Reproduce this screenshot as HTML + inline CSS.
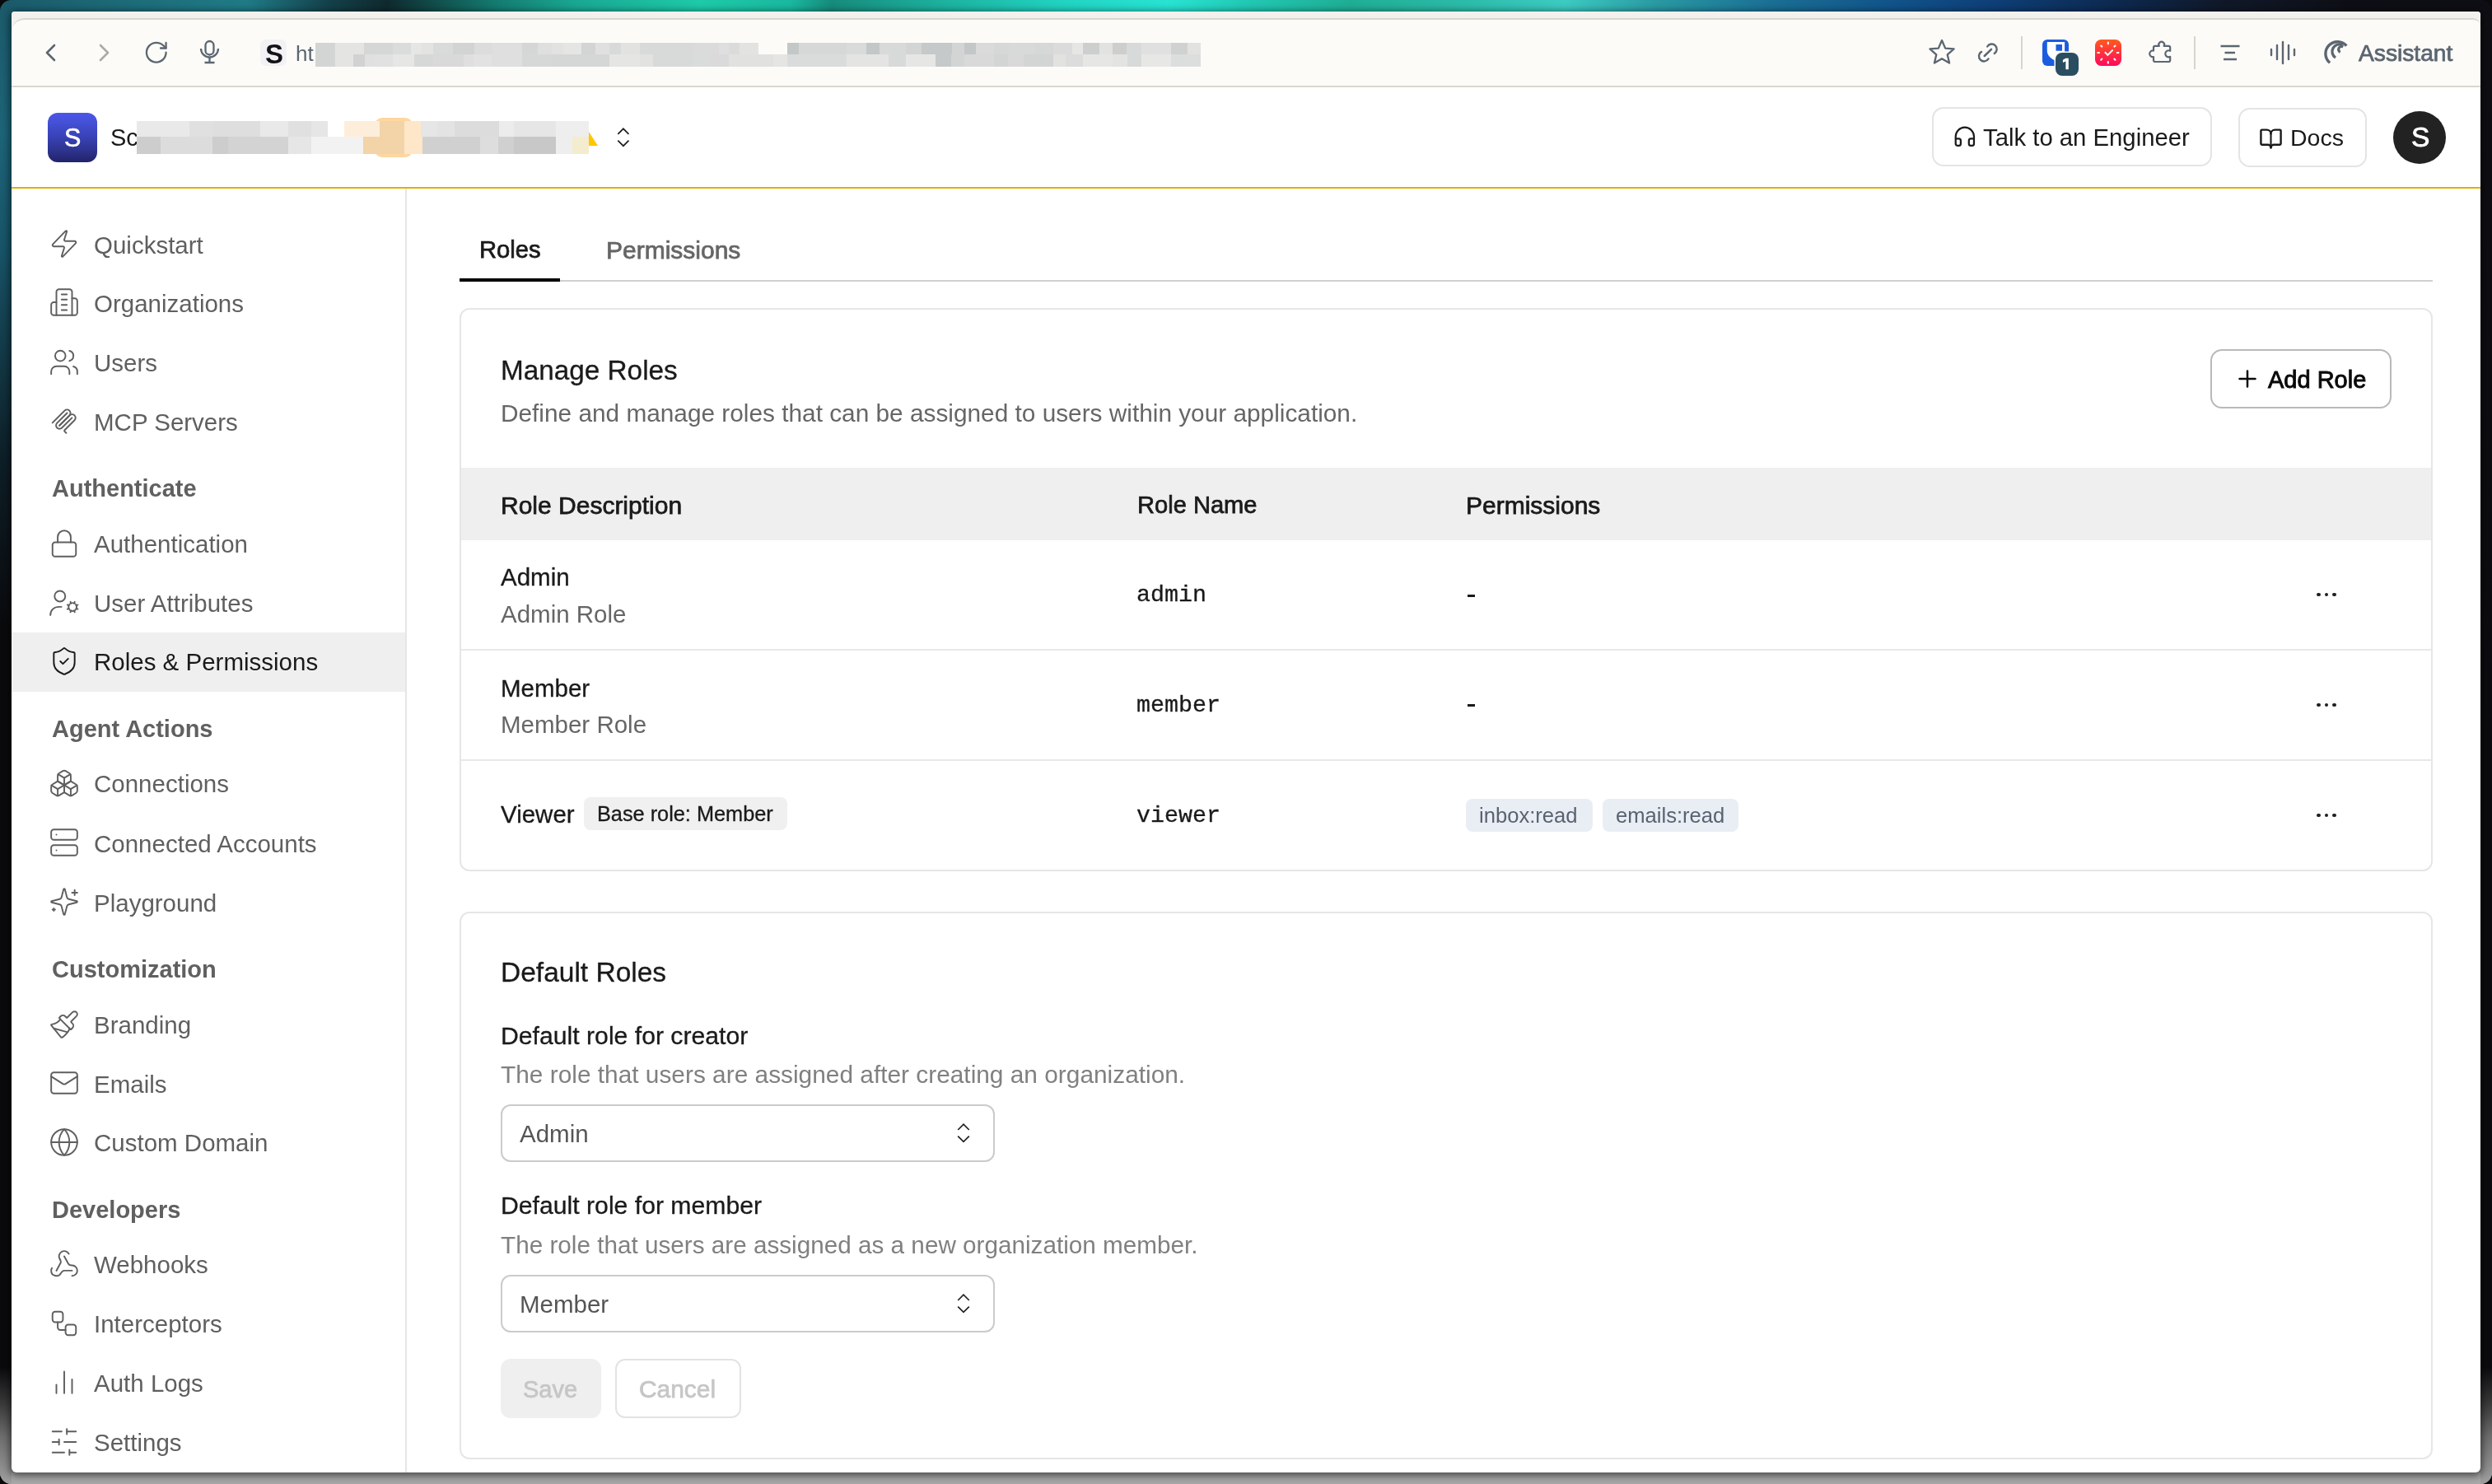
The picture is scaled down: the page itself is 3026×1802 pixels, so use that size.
<!DOCTYPE html>
<html><head><meta charset="utf-8"><title>Roles &amp; Permissions</title>
<style>
html,body{margin:0;padding:0;}
body{width:3026px;height:1802px;position:relative;overflow:hidden;background:#0a0a0c;font-family:"Liberation Sans", sans-serif;-webkit-font-smoothing:antialiased;}
.t{position:absolute;white-space:pre;will-change:transform;}
.r{position:absolute;box-sizing:border-box;}
</style></head><body>

<div class="r" style="left:0px;top:0px;width:3026px;height:1802px;background:linear-gradient(180deg,#0b0b0e 0px,#0b0b0e 1660px,#6a6a6a 1760px,#a9a9a9 1802px);border-radius:14px;"></div>
<div class="r" style="left:0px;top:0px;width:3026px;height:16px;background:linear-gradient(90deg,#1b5a6a 0px,#1f7b86 300px,#14404a 400px,#0f2a2e 470px,#147a70 600px,#1aa893 700px,#1ecaa9 850px,#1ab89f 960px,#178b7c 1010px,#1db3a0 1150px,#22d5c4 1300px,#28e3d3 1420px,#22c7b2 1520px,#1fae95 1640px,#2ab9a6 1760px,#3ccbc2 1900px,#2a9aa3 2010px,#1a6f95 2150px,#11538a 2300px,#0e3f78 2420px,#0d2a52 2560px,#101828 2700px,#0e0f16 2850px,#0e0e14 3026px);border-radius:18px 18px 0 0;"></div>
<div class="r" style="left:0px;top:0px;width:14px;height:1802px;background:linear-gradient(180deg,#1b5a6a 0px,#1d6478 160px,#185468 300px,#0d1e26 560px,#0a0a0d 760px,#0a0a0d 1660px,#3a3a3a 1705px,#6e6e6e 1745px,#959595 1790px,#a0a0a0 1802px);border-radius:14px 0 0 14px;"></div>
<div class="r" style="left:3012px;top:0px;width:14px;height:1802px;background:linear-gradient(180deg,#0e0e14 0px,#0b0b0f 900px,#0b0b0f 1660px,#3a3a3a 1705px,#6e6e6e 1745px,#959595 1790px,#a0a0a0 1802px);border-radius:0 14px 14px 0;"></div>
<div class="r" style="left:14px;top:1788px;width:2998px;height:14px;background:#a8a8a8;"></div>
<div class="r" style="left:14px;top:14px;width:2998px;height:1774px;background:#ffffff;border-radius:4px 4px 6px 6px;box-shadow:0 2px 10px 2px rgba(0,0,0,0.55);"></div>
<div class="r" style="left:14px;top:14px;width:2998px;height:46px;background:#f2f1ee;border-radius:4px 4px 0 0;"></div>
<div class="r" style="left:14px;top:22px;width:2998px;height:84px;background:#fcfbf8;border-top:2px solid #d8d7cf;border-bottom:2px solid #d8d7cf;border-radius:16px 9px 0 0;"></div>
<svg class="r" style="left:52px;top:52px;" width="20" height="24" viewBox="0 0 20 24" fill="none" stroke-linecap="round" stroke-linejoin="round"><path d="M14 3 L5 12 L14 21" stroke="#5b6670" stroke-width="2.6"/></svg>
<svg class="r" style="left:117px;top:52px;" width="20" height="24" viewBox="0 0 20 24" fill="none" stroke-linecap="round" stroke-linejoin="round"><path d="M5 3 L14 12 L5 21" stroke="#a9aba7" stroke-width="2.6"/></svg>
<svg class="r" style="left:174.3px;top:48.3px;" width="31.5" height="31.5" viewBox="0 0 24 24" fill="none" stroke-linecap="round" stroke-linejoin="round"><path d="M21 12a9 9 0 1 1-9-9c2.52 0 4.93 1 6.74 2.74L21 8" stroke="#5b6670" stroke-width="1.75"/><path d="M21 3v5h-5" stroke="#5b6670" stroke-width="1.75"/></svg>
<svg class="r" style="left:238px;top:46px;" width="34" height="34" viewBox="0 0 34 34" fill="none" stroke-linecap="round" stroke-linejoin="round"><rect x="11.5" y="4" width="10" height="16.5" rx="5" stroke="#5b6670" stroke-width="2.3"/><path d="M6 13 A10.5 10.5 0 0 0 27 13" stroke="#5b6670" stroke-width="2.3" stroke-linecap="butt"/><path d="M16.5 24 V29.5 M10.5 30 H22.5" stroke="#5b6670" stroke-width="2.3" stroke-linecap="butt"/></svg>
<div class="r" style="left:316px;top:48px;width:32px;height:32px;background:#f2f2f5;border-radius:7px;"></div>
<div class="t" style="left:321.50px;top:44.26px;font-size:33px;line-height:43px;color:#111318;font-weight:700;font-family:'Liberation Sans', sans-serif;letter-spacing:0px;">S</div>
<div class="t" style="left:359.00px;top:48.19px;font-size:26px;line-height:34px;color:#5b6670;font-weight:400;font-family:'Liberation Sans', sans-serif;letter-spacing:0px;">ht</div>
<div class="r" style="left:383px;top:52px;width:24px;height:14px;background:#d3d5d5;"></div>
<div class="r" style="left:407px;top:52px;width:35px;height:14px;background:#e4e4e3;"></div>
<div class="r" style="left:442px;top:52px;width:35px;height:14px;background:#d5d7d7;"></div>
<div class="r" style="left:477px;top:52px;width:22px;height:14px;background:#dadcdb;"></div>
<div class="r" style="left:499px;top:52px;width:13px;height:14px;background:#e6e6e5;"></div>
<div class="r" style="left:512px;top:52px;width:14px;height:14px;background:#e3e3e2;"></div>
<div class="r" style="left:526px;top:52px;width:24px;height:14px;background:#d9dada;"></div>
<div class="r" style="left:550px;top:52px;width:26px;height:14px;background:#d2d3d3;"></div>
<div class="r" style="left:576px;top:52px;width:22px;height:14px;background:#dcdcdc;"></div>
<div class="r" style="left:598px;top:52px;width:36px;height:14px;background:#dfdfdf;"></div>
<div class="r" style="left:634px;top:52px;width:19px;height:14px;background:#d5d7d7;"></div>
<div class="r" style="left:653px;top:52px;width:17px;height:14px;background:#dfdfdf;"></div>
<div class="r" style="left:670px;top:52px;width:14px;height:14px;background:#e2e2e1;"></div>
<div class="r" style="left:684px;top:52px;width:22px;height:14px;background:#e5e5e4;"></div>
<div class="r" style="left:706px;top:52px;width:17px;height:14px;background:#d3d5d5;"></div>
<div class="r" style="left:723px;top:52px;width:17px;height:14px;background:#e0e0e0;"></div>
<div class="r" style="left:740px;top:52px;width:14px;height:14px;background:#d8d9d9;"></div>
<div class="r" style="left:754px;top:52px;width:23px;height:14px;background:#e2e2e1;"></div>
<div class="r" style="left:777px;top:52px;width:64px;height:14px;background:#d8d9d9;"></div>
<div class="r" style="left:841px;top:52px;width:32px;height:14px;background:#dbdbdb;"></div>
<div class="r" style="left:873px;top:52px;width:12px;height:14px;background:#dfdfdf;"></div>
<div class="r" style="left:885px;top:52px;width:13px;height:14px;background:#dbdbdb;"></div>
<div class="r" style="left:898px;top:52px;width:23px;height:14px;background:#e3e3e2;"></div>
<div class="r" style="left:956px;top:52px;width:14px;height:14px;background:#c3c7c8;"></div>
<div class="r" style="left:970px;top:52px;width:58px;height:14px;background:#d6d8d8;"></div>
<div class="r" style="left:1028px;top:52px;width:24px;height:14px;background:#d9dbdb;"></div>
<div class="r" style="left:1052px;top:52px;width:16px;height:14px;background:#c3c7c8;"></div>
<div class="r" style="left:1068px;top:52px;width:32px;height:14px;background:#d8dada;"></div>
<div class="r" style="left:1100px;top:52px;width:19px;height:14px;background:#d3d5d5;"></div>
<div class="r" style="left:1119px;top:52px;width:37px;height:14px;background:#c5c9ca;"></div>
<div class="r" style="left:1156px;top:52px;width:15px;height:14px;background:#d3d5d5;"></div>
<div class="r" style="left:1171px;top:52px;width:14px;height:14px;background:#c3c7c8;"></div>
<div class="r" style="left:1185px;top:52px;width:22px;height:14px;background:#dadadb;"></div>
<div class="r" style="left:1207px;top:52px;width:18px;height:14px;background:#d6d8d8;"></div>
<div class="r" style="left:1225px;top:52px;width:31px;height:14px;background:#d8d9d9;"></div>
<div class="r" style="left:1256px;top:52px;width:23px;height:14px;background:#d6d8d8;"></div>
<div class="r" style="left:1279px;top:52px;width:23px;height:14px;background:#dbdbdb;"></div>
<div class="r" style="left:1302px;top:52px;width:13px;height:14px;background:#e6e6e5;"></div>
<div class="r" style="left:1315px;top:52px;width:20px;height:14px;background:#cdcfcf;"></div>
<div class="r" style="left:1335px;top:52px;width:16px;height:14px;background:#e2e2e1;"></div>
<div class="r" style="left:1351px;top:52px;width:17px;height:14px;background:#cdcfcf;"></div>
<div class="r" style="left:1368px;top:52px;width:18px;height:14px;background:#d8dada;"></div>
<div class="r" style="left:1386px;top:52px;width:36px;height:14px;background:#e0e0e1;"></div>
<div class="r" style="left:1422px;top:52px;width:20px;height:14px;background:#d0d2d2;"></div>
<div class="r" style="left:1442px;top:52px;width:16px;height:14px;background:#e2e2e1;"></div>
<div class="r" style="left:383px;top:66px;width:24px;height:15px;background:#d3d5d5;"></div>
<div class="r" style="left:407px;top:66px;width:22px;height:15px;background:#e4e4e3;"></div>
<div class="r" style="left:429px;top:66px;width:14px;height:15px;background:#d1d3d3;"></div>
<div class="r" style="left:443px;top:66px;width:12px;height:15px;background:#dfe0df;"></div>
<div class="r" style="left:455px;top:66px;width:22px;height:15px;background:#e1e1e1;"></div>
<div class="r" style="left:477px;top:66px;width:26px;height:15px;background:#e6e6e5;"></div>
<div class="r" style="left:503px;top:66px;width:23px;height:15px;background:#d6d8d8;"></div>
<div class="r" style="left:526px;top:66px;width:37px;height:15px;background:#d9d9d9;"></div>
<div class="r" style="left:563px;top:66px;width:12px;height:15px;background:#dfdfdf;"></div>
<div class="r" style="left:575px;top:66px;width:22px;height:15px;background:#e2e2e2;"></div>
<div class="r" style="left:597px;top:66px;width:37px;height:15px;background:#dfdfdf;"></div>
<div class="r" style="left:634px;top:66px;width:36px;height:15px;background:#d6d8d8;"></div>
<div class="r" style="left:670px;top:66px;width:70px;height:15px;background:#d5d7d7;"></div>
<div class="r" style="left:740px;top:66px;width:37px;height:15px;background:#e5e5e4;"></div>
<div class="r" style="left:777px;top:66px;width:16px;height:15px;background:#e2e2e1;"></div>
<div class="r" style="left:793px;top:66px;width:48px;height:15px;background:#d8d9d9;"></div>
<div class="r" style="left:841px;top:66px;width:21px;height:15px;background:#dadcdb;"></div>
<div class="r" style="left:862px;top:66px;width:23px;height:15px;background:#dadada;"></div>
<div class="r" style="left:885px;top:66px;width:54px;height:15px;background:#e1e1e0;"></div>
<div class="r" style="left:939px;top:66px;width:17px;height:15px;background:#e5e5e4;"></div>
<div class="r" style="left:956px;top:66px;width:72px;height:15px;background:#dadcdc;"></div>
<div class="r" style="left:1028px;top:66px;width:51px;height:15px;background:#e4e4e3;"></div>
<div class="r" style="left:1079px;top:66px;width:21px;height:15px;background:#d8dada;"></div>
<div class="r" style="left:1100px;top:66px;width:36px;height:15px;background:#e6e6e5;"></div>
<div class="r" style="left:1136px;top:66px;width:19px;height:15px;background:#c5c9ca;"></div>
<div class="r" style="left:1155px;top:66px;width:16px;height:15px;background:#d3d5d5;"></div>
<div class="r" style="left:1171px;top:66px;width:36px;height:15px;background:#d9d9da;"></div>
<div class="r" style="left:1207px;top:66px;width:17px;height:15px;background:#d3d5d5;"></div>
<div class="r" style="left:1224px;top:66px;width:19px;height:15px;background:#d9d9d9;"></div>
<div class="r" style="left:1243px;top:66px;width:36px;height:15px;background:#d3d5d5;"></div>
<div class="r" style="left:1279px;top:66px;width:15px;height:15px;background:#e2e2e1;"></div>
<div class="r" style="left:1294px;top:66px;width:21px;height:15px;background:#dcdcdc;"></div>
<div class="r" style="left:1315px;top:66px;width:36px;height:15px;background:#e6e6e5;"></div>
<div class="r" style="left:1351px;top:66px;width:18px;height:15px;background:#e3e3e2;"></div>
<div class="r" style="left:1369px;top:66px;width:17px;height:15px;background:#d8dada;"></div>
<div class="r" style="left:1386px;top:66px;width:36px;height:15px;background:#e7e7e6;"></div>
<div class="r" style="left:1422px;top:66px;width:36px;height:15px;background:#dcdede;"></div>
<svg class="r" style="left:2340px;top:46px;" width="36" height="34" viewBox="0 0 36 34" fill="none" stroke-linecap="round" stroke-linejoin="round"><path d="M18 3 L22.2 12.6 L32.6 13.4 L24.7 20.3 L27.1 30.5 L18 25.2 L8.9 30.5 L11.3 20.3 L3.4 13.4 L13.8 12.6 Z" stroke="#5b6670" stroke-width="2.3"/></svg>
<svg class="r" style="left:2396px;top:44px;" width="40" height="40" viewBox="0 0 40 40" fill="none" stroke-linecap="round" stroke-linejoin="round"><path d="M13.7 24 L22 15.9" stroke="#5b6670" stroke-width="2.5"/><path d="M17.2 12.5 A6.2 6.2 0 1 1 25.7 21" stroke="#5b6670" stroke-width="2.4"/><path d="M18.5 27.4 A6.2 6.2 0 1 1 10 18.9" stroke="#5b6670" stroke-width="2.4"/></svg>
<div class="r" style="left:2454px;top:44px;width:2px;height:40px;background:#d6d5cc;"></div>
<svg class="r" style="left:2476px;top:44px" width="52" height="52" viewBox="0 0 52 52"><rect x="4" y="4" width="32" height="32" rx="6" fill="#1b5ddf"/><path d="M9.8 7.1 H31.1 V30 H20 C14 27 9.8 23 9.8 18 Z" fill="#ffffff"/><rect x="20.5" y="10" width="7.5" height="7.7" fill="#1b5ddf"/><rect x="18.5" y="18.5" width="31" height="31" rx="9" fill="#fcfbf8"/><rect x="20" y="20" width="28" height="28" rx="8" fill="#2a4d60"/></svg>
<svg class="r" style="left:2500px;top:66px" width="16" height="22" viewBox="0 0 16 22"><path d="M8.3 4.7 H11.8 V18.3 H8.4 V8.6 L4.9 9.9 V6.8 Z" fill="#fff"/></svg>
<svg class="r" style="left:2544px;top:48px" width="32" height="32" viewBox="0 0 32 32"><defs><linearGradient id="rg" x1="0" y1="0" x2="0" y2="1"><stop offset="0" stop-color="#ff5a1e"/><stop offset="1" stop-color="#ff0a5c"/></linearGradient></defs><rect x="0" y="0" width="32" height="32" rx="7.5" fill="url(#rg)"/><g stroke="#fff" stroke-width="2.1" stroke-linecap="round"><path d="M15.8 3.6v1.6M15.8 27v1.6M3.3 16h1.6M26.8 16h1.6M7.2 7.5l1.1 1.1M23.4 23.6l1.1 1.1M7.2 24.7l1.1-1.1M23.4 8.6l1.1-1.1"/></g><path d="M11.9 15.2 L15.4 18.9 L21.6 12.5" stroke="#fff" stroke-width="2" fill="none"/></svg>
<svg class="r" style="left:2600px;top:44px;" width="45" height="40" viewBox="0 0 45 40" fill="none" stroke-linecap="round" stroke-linejoin="round"><path d="M21.8 11.9 A3.4 3.4 0 1 1 27.6 11.9 H33.2 a2 2 0 0 1 2 2 V17.8 A4 4 0 1 0 35.2 24.8 V29 a2 2 0 0 1 -2 2 H17 a2 2 0 0 1 -2 -2 V25.1 A3.9 3.9 0 1 1 15 17.5 V13.9 a2 2 0 0 1 2 -2 Z" stroke="#5b6670" stroke-width="2.2"/></svg>
<div class="r" style="left:2664px;top:44px;width:2px;height:40px;background:#d6d5cc;"></div>
<svg class="r" style="left:2690px;top:48px;" width="36" height="30" viewBox="0 0 36 30" fill="none" stroke-linecap="round" stroke-linejoin="round"><path d="M6.5 8 H29.5 M11.5 16 H24 M10 24 H26" stroke="#5b6670" stroke-width="2.3" stroke-linecap="butt"/></svg>
<svg class="r" style="left:2752px;top:48px;" width="40" height="32" viewBox="0 0 40 32" fill="none" stroke-linecap="round" stroke-linejoin="round"><path d="M6 12v7 M13 7v17 M20 3v26 M27 7v17 M34 12v7" stroke="#5b6670" stroke-width="2.4"/></svg>
<svg class="r" style="left:2815px;top:44px;" width="45" height="40" viewBox="0 0 45 40" fill="none" stroke-linecap="round" stroke-linejoin="round"><path d="M14.08 32.31 A14.5 14.5 0 1 1 34.34 11.69" stroke="#5b6670" stroke-width="3.4" stroke-linecap="butt"/><path d="M20.99 25.98 A8.7 8.7 0 0 1 29.55 10.85" stroke="#5b6670" stroke-width="3.3" stroke-linecap="butt"/><path d="M26.72 19.40 A3.7 3.7 0 1 1 30.25 12.90" stroke="#5b6670" stroke-width="3.2" stroke-linecap="butt"/></svg>
<div class="t" style="left:2864.00px;top:45.82px;font-size:28.2px;line-height:37px;color:#5b6670;font-weight:400;font-family:'Liberation Sans', sans-serif;letter-spacing:0px;-webkit-text-stroke:0.75px #5b6670;">Assistant</div>
<div class="r" style="left:58px;top:137px;width:60px;height:60px;background:linear-gradient(180deg,#4a56e8 0%,#4450d6 20%,#3841b4 50%,#2c3188 80%,#22226a 100%);border-radius:12px;"></div>
<div class="t" style="left:77.50px;top:147.23px;font-size:30.5px;line-height:40px;color:#ffffff;font-weight:400;font-family:'Liberation Sans', sans-serif;letter-spacing:0px;-webkit-text-stroke:0.6px #ffffff;">S</div>
<div class="t" style="left:134.00px;top:148.15px;font-size:29px;line-height:38px;color:#1a1a1a;font-weight:400;font-family:'Liberation Sans', sans-serif;letter-spacing:0px;">Sc</div>
<div class="r" style="left:455px;top:143px;width:46px;height:48px;background:#fdd6a0;border-radius:9px;"></div>
<div class="r" style="left:166px;top:147px;width:64px;height:19px;background:#e9e9e9;"></div>
<div class="r" style="left:230px;top:147px;width:28px;height:19px;background:#e0e0e0;"></div>
<div class="r" style="left:258px;top:147px;width:58px;height:19px;background:#dedede;"></div>
<div class="r" style="left:316px;top:147px;width:34px;height:19px;background:#e9e9e9;"></div>
<div class="r" style="left:350px;top:147px;width:28px;height:19px;background:#e0e0e0;"></div>
<div class="r" style="left:378px;top:147px;width:20px;height:19px;background:#e6e6e6;"></div>
<div class="r" style="left:418px;top:147px;width:43px;height:19px;background:#fdeedc;"></div>
<div class="r" style="left:461px;top:147px;width:30px;height:19px;background:#f2d4a8;"></div>
<div class="r" style="left:491px;top:147px;width:20px;height:19px;background:#fee7c9;"></div>
<div class="r" style="left:511px;top:147px;width:20px;height:19px;background:#e6e6e6;"></div>
<div class="r" style="left:531px;top:147px;width:21px;height:19px;background:#e3e3e3;"></div>
<div class="r" style="left:552px;top:147px;width:54px;height:19px;background:#dcdcdc;"></div>
<div class="r" style="left:606px;top:147px;width:18px;height:19px;background:#ececec;"></div>
<div class="r" style="left:624px;top:147px;width:51px;height:19px;background:#e6e6e6;"></div>
<div class="r" style="left:675px;top:147px;width:40px;height:19px;background:#eeeeee;"></div>
<div class="r" style="left:166px;top:166px;width:29px;height:21px;background:#cdcdcd;"></div>
<div class="r" style="left:195px;top:166px;width:63px;height:21px;background:#dcdcdc;"></div>
<div class="r" style="left:258px;top:166px;width:19px;height:21px;background:#cdcdcd;"></div>
<div class="r" style="left:277px;top:166px;width:73px;height:21px;background:#d3d3d3;"></div>
<div class="r" style="left:350px;top:166px;width:28px;height:21px;background:#e6e6e6;"></div>
<div class="r" style="left:378px;top:166px;width:63px;height:21px;background:#f2f2f2;"></div>
<div class="r" style="left:441px;top:166px;width:20px;height:21px;background:#f2d4a8;"></div>
<div class="r" style="left:461px;top:166px;width:30px;height:21px;background:#f2d4a8;"></div>
<div class="r" style="left:491px;top:166px;width:22px;height:21px;background:#fee7c9;"></div>
<div class="r" style="left:513px;top:166px;width:70px;height:21px;background:#d0d0d0;"></div>
<div class="r" style="left:583px;top:166px;width:22px;height:21px;background:#dddddd;"></div>
<div class="r" style="left:605px;top:166px;width:19px;height:21px;background:#d0d0d0;"></div>
<div class="r" style="left:624px;top:166px;width:51px;height:21px;background:#c8c8c8;"></div>
<div class="r" style="left:675px;top:166px;width:20px;height:21px;background:#eeeeee;"></div>
<div class="r" style="left:695px;top:166px;width:20px;height:21px;background:#f3eccf;"></div>
<svg class="r" style="left:712px;top:158px" width="16" height="20" viewBox="0 0 16 20"><path d="M3 2 L14 19 L3 19 Z" fill="#ffc700"/></svg>
<svg class="r" style="left:744px;top:152px;" width="26" height="30" viewBox="0 0 26 30" fill="none" stroke-linecap="round" stroke-linejoin="round"><path d="M6.3 10.9 L12.9 4.3 L19.5 10.9 M6.3 18.6 L12.9 25.2 L19.5 18.6" stroke="#1f1f1f" stroke-width="1.7" stroke-linecap="butt" stroke-linejoin="miter"/></svg>
<div class="r" style="left:2346px;top:130px;width:340px;height:72px;border:2px solid #e4e4e4;border-radius:14px;background:#fff;"></div>
<svg class="r" style="left:2370.8px;top:151.2px;" width="29.7" height="29.7" viewBox="0 0 24 24" fill="none" stroke-linecap="round" stroke-linejoin="round"><path d="M3 14h3a2 2 0 0 1 2 2v3a2 2 0 0 1-2 2H5a2 2 0 0 1-2-2v-7a9 9 0 0 1 18 0v7a2 2 0 0 1-2 2h-1a2 2 0 0 1-2-2v-3a2 2 0 0 1 2-2h3" stroke="#1a1a1a" stroke-width="1.8"/></svg>
<div class="t" style="left:2408.00px;top:148.14px;font-size:29.3px;line-height:38px;color:#1a1a1a;font-weight:400;font-family:'Liberation Sans', sans-serif;letter-spacing:0px;">Talk to an Engineer</div>
<div class="r" style="left:2718px;top:131px;width:156px;height:72px;border:2px solid #e4e4e4;border-radius:14px;background:#fff;"></div>
<svg class="r" style="left:2743px;top:154.4px;" width="29" height="29" viewBox="0 0 24 24" fill="none" stroke-linecap="round" stroke-linejoin="round"><path d="M12 7v14" stroke="#1a1a1a" stroke-width="1.75"/><path d="M3 18a1 1 0 0 1-1-1V4a1 1 0 0 1 1-1h5a4 4 0 0 1 4 4 4 4 0 0 1 4-4h5a1 1 0 0 1 1 1v13a1 1 0 0 1-1 1h-6a3 3 0 0 0-3 3 3 3 0 0 0-3-3z" stroke="#1a1a1a" stroke-width="2"/></svg>
<div class="t" style="left:2780.50px;top:148.92px;font-size:28.5px;line-height:37px;color:#1a1a1a;font-weight:400;font-family:'Liberation Sans', sans-serif;letter-spacing:0px;">Docs</div>
<div class="r" style="left:2906px;top:135px;width:64px;height:64px;background:#222222;border-radius:50%;"></div>
<div class="t" style="left:2927.50px;top:145.09px;font-size:33.5px;line-height:44px;color:#ffffff;font-weight:400;font-family:'Liberation Sans', sans-serif;letter-spacing:0px;-webkit-text-stroke:0.9px #ffffff;">S</div>
<div class="r" style="left:14px;top:227px;width:2998px;height:2px;background:#e8ab00;"></div>
<div class="r" style="left:492px;top:229px;width:2px;height:1559px;background:#e6e6e6;"></div>
<div class="r" style="left:14px;top:768px;width:478px;height:72px;background:#efefef;"></div>
<svg class="r" style="left:59.0px;top:277.2px;" width="38" height="38" viewBox="0 0 24 24" fill="none" stroke-linecap="round" stroke-linejoin="round"><g stroke="#5f5f5f" stroke-width="1.22"><path d="M4 14a1 1 0 0 1-.78-1.63l9.9-10.2a.5.5 0 0 1 .86.46l-1.92 6.02A1 1 0 0 0 13 10h7a1 1 0 0 1 .78 1.63l-9.9 10.2a.5.5 0 0 1-.86-.46l1.92-6.02A1 1 0 0 0 11 14z"/></g></svg>
<div class="t" style="left:114.00px;top:278.67px;font-size:29.5px;line-height:38px;color:#5f5f5f;font-weight:400;font-family:'Liberation Sans', sans-serif;letter-spacing:0px;">Quickstart</div>
<svg class="r" style="left:59.0px;top:348.3px;" width="38" height="38" viewBox="0 0 24 24" fill="none" stroke-linecap="round" stroke-linejoin="round"><g stroke="#5f5f5f" stroke-width="1.22"><path d="M6 22V4a2 2 0 0 1 2-2h8a2 2 0 0 1 2 2v18Z"/><path d="M6 12H4a2 2 0 0 0-2 2v6a2 2 0 0 0 2 2h2"/><path d="M18 9h2a2 2 0 0 1 2 2v9a2 2 0 0 1-2 2h-2"/><path d="M10 6h4"/><path d="M10 10h4"/><path d="M10 14h4"/><path d="M10 18h4"/></g></svg>
<div class="t" style="left:114.00px;top:349.77px;font-size:29.5px;line-height:38px;color:#5f5f5f;font-weight:400;font-family:'Liberation Sans', sans-serif;letter-spacing:0px;">Organizations</div>
<svg class="r" style="left:59.0px;top:420.5px;" width="38" height="38" viewBox="0 0 24 24" fill="none" stroke-linecap="round" stroke-linejoin="round"><g stroke="#5f5f5f" stroke-width="1.22"><path d="M16 21v-2a4 4 0 0 0-4-4H6a4 4 0 0 0-4 4v2"/><circle cx="9" cy="7" r="4"/><path d="M22 21v-2a4 4 0 0 0-3-3.87"/><path d="M16 3.13a4 4 0 0 1 0 7.75"/></g></svg>
<div class="t" style="left:114.00px;top:421.97px;font-size:29.5px;line-height:38px;color:#5f5f5f;font-weight:400;font-family:'Liberation Sans', sans-serif;letter-spacing:0px;">Users</div>
<svg class="r" style="left:59.0px;top:492.20000000000005px;" width="38" height="38" viewBox="0 0 24 24" fill="none" stroke-linecap="round" stroke-linejoin="round"><g stroke="#5f5f5f" stroke-width="1.22"><path d="M3 13.5 L12.3 4.2 a2.6 2.6 0 0 1 3.7 3.7 L8.2 15.7"/><path d="M8.5 15.5 L16.2 7.8 a2.6 2.6 0 0 1 3.7 3.7 L12.3 19.1 a.7.7 0 0 0 0 1 L13.5 21.3"/><path d="M14.2 6 L6.5 13.7 a2.6 2.6 0 0 0 3.7 3.7 L17.9 9.7"/></g></svg>
<div class="t" style="left:114.00px;top:493.67px;font-size:29.5px;line-height:38px;color:#5f5f5f;font-weight:400;font-family:'Liberation Sans', sans-serif;letter-spacing:0px;">MCP Servers</div>
<div class="t" style="left:63.00px;top:574.15px;font-size:29px;line-height:38px;color:#606060;font-weight:700;font-family:'Liberation Sans', sans-serif;letter-spacing:0px;">Authenticate</div>
<svg class="r" style="left:59.0px;top:640.5px;" width="38" height="38" viewBox="0 0 24 24" fill="none" stroke-linecap="round" stroke-linejoin="round"><g stroke="#5f5f5f" stroke-width="1.22"><rect width="18" height="11" x="3" y="11" rx="2" ry="2"/><path d="M7 11V7a5 5 0 0 1 10 0v4"/></g></svg>
<div class="t" style="left:114.00px;top:641.97px;font-size:29.5px;line-height:38px;color:#5f5f5f;font-weight:400;font-family:'Liberation Sans', sans-serif;letter-spacing:0px;">Authentication</div>
<svg class="r" style="left:59.0px;top:712.5px;" width="38" height="38" viewBox="0 0 24 24" fill="none" stroke-linecap="round" stroke-linejoin="round"><g stroke="#5f5f5f" stroke-width="1.22"><circle cx="8.7" cy="6.9" r="4.1"/><path d="M1.4 21.4 C1.4 17.6 4 15.1 8.2 15.1 H9.8"/><circle cx="18.4" cy="15.2" r="3.1"/><path d="M21.17 16.35L22.37 16.85M19.55 17.97L20.05 19.17M17.25 17.97L16.75 19.17M15.63 16.35L14.43 16.85M15.63 14.05L14.43 13.55M17.25 12.43L16.75 11.23M19.55 12.43L20.05 11.23M21.17 14.05L22.37 13.55"/></g></svg>
<div class="t" style="left:114.00px;top:713.97px;font-size:29.5px;line-height:38px;color:#5f5f5f;font-weight:400;font-family:'Liberation Sans', sans-serif;letter-spacing:0px;">User Attributes</div>
<svg class="r" style="left:59.0px;top:783.7px;" width="38" height="38" viewBox="0 0 24 24" fill="none" stroke-linecap="round" stroke-linejoin="round"><g stroke="#1a1a1a" stroke-width="1.22"><path d="M20 13c0 5-3.5 7.5-7.66 8.95a1 1 0 0 1-.67-.01C7.5 20.5 4 18 4 13V6a1 1 0 0 1 1-1c2 0 4.5-1.2 6.24-2.72a1.17 1.17 0 0 1 1.52 0C14.51 3.81 17 5 19 5a1 1 0 0 1 1 1z"/><path d="m9 12 2 2 4-4"/></g></svg>
<div class="t" style="left:114.00px;top:785.17px;font-size:29.5px;line-height:38px;color:#1a1a1a;font-weight:400;font-family:'Liberation Sans', sans-serif;letter-spacing:0px;">Roles &amp; Permissions</div>
<div class="t" style="left:63.00px;top:865.55px;font-size:29px;line-height:38px;color:#606060;font-weight:700;font-family:'Liberation Sans', sans-serif;letter-spacing:0px;">Agent Actions</div>
<svg class="r" style="left:59.0px;top:931.9px;" width="38" height="38" viewBox="0 0 24 24" fill="none" stroke-linecap="round" stroke-linejoin="round"><g stroke="#5f5f5f" stroke-width="1.22"><path d="M2.97 12.92A2 2 0 0 0 2 14.63v3.24a2 2 0 0 0 .97 1.71l3 1.8a2 2 0 0 0 2.06 0L12 19v-5.5l-5-3-4.03 2.42Z"/><path d="m7 16.5-4.74-2.85"/><path d="m7 16.5 5-3"/><path d="M7 16.5v5.17"/><path d="M12 13.5V19l3.97 2.38a2 2 0 0 0 2.06 0l3-1.8a2 2 0 0 0 .97-1.71v-3.24a2 2 0 0 0-.97-1.71L17 10.5l-5 3Z"/><path d="m17 16.5-5-3"/><path d="m17 16.5 4.74-2.85"/><path d="M17 16.5v5.17"/><path d="M7.97 4.42A2 2 0 0 0 7 6.13v4.37l5 3 5-3V6.13a2 2 0 0 0-.97-1.71l-3-1.8a2 2 0 0 0-2.06 0l-3 1.8Z"/><path d="M12 8 7.26 5.15"/><path d="m12 8 4.74-2.85"/><path d="M12 13.5V8"/></g></svg>
<div class="t" style="left:114.00px;top:933.37px;font-size:29.5px;line-height:38px;color:#5f5f5f;font-weight:400;font-family:'Liberation Sans', sans-serif;letter-spacing:0px;">Connections</div>
<svg class="r" style="left:59.0px;top:1004.0999999999999px;" width="38" height="38" viewBox="0 0 24 24" fill="none" stroke-linecap="round" stroke-linejoin="round"><g stroke="#5f5f5f" stroke-width="1.22"><rect width="20" height="8" x="2" y="2" rx="2" ry="2"/><rect width="20" height="8" x="2" y="14" rx="2" ry="2"/><line x1="6" x2="6.01" y1="6" y2="6"/><line x1="6" x2="6.01" y1="18" y2="18"/></g></svg>
<div class="t" style="left:114.00px;top:1005.57px;font-size:29.5px;line-height:38px;color:#5f5f5f;font-weight:400;font-family:'Liberation Sans', sans-serif;letter-spacing:0px;">Connected Accounts</div>
<svg class="r" style="left:59.0px;top:1076.3px;" width="38" height="38" viewBox="0 0 24 24" fill="none" stroke-linecap="round" stroke-linejoin="round"><g stroke="#5f5f5f" stroke-width="1.22"><path d="M9.937 15.5A2 2 0 0 0 8.5 14.063l-6.135-1.582a.5.5 0 0 1 0-.962L8.5 9.936A2 2 0 0 0 9.937 8.5l1.582-6.135a.5.5 0 0 1 .963 0L14.063 8.5A2 2 0 0 0 15.5 9.937l6.135 1.581a.5.5 0 0 1 0 .964L15.5 14.063a2 2 0 0 0-1.437 1.437l-1.582 6.135a.5.5 0 0 1-.963 0z"/><path d="M20 3v4"/><path d="M22 5h-4"/><path d="M4 17v2"/><path d="M5 18H3"/></g></svg>
<div class="t" style="left:114.00px;top:1077.77px;font-size:29.5px;line-height:38px;color:#5f5f5f;font-weight:400;font-family:'Liberation Sans', sans-serif;letter-spacing:0px;">Playground</div>
<div class="t" style="left:63.00px;top:1157.85px;font-size:29px;line-height:38px;color:#606060;font-weight:700;font-family:'Liberation Sans', sans-serif;letter-spacing:0px;">Customization</div>
<svg class="r" style="left:59.0px;top:1224.8px;" width="38" height="38" viewBox="0 0 24 24" fill="none" stroke-linecap="round" stroke-linejoin="round"><g stroke="#5f5f5f" stroke-width="1.22"><path d="m14.622 17.897-10.68-2.913"/><path d="M18.376 2.622a1 1 0 1 1 3.002 3.002L17.36 9.643a.5.5 0 0 0 0 .707l.944.944a2.41 2.41 0 0 1 0 3.408l-.944.944a.5.5 0 0 1-.707 0L8.354 7.348a.5.5 0 0 1 0-.707l.944-.944a2.41 2.41 0 0 1 3.408 0l.944.944a.5.5 0 0 0 .707 0z"/><path d="M9 8c-1.804 2.71-3.97 3.46-6.583 3.948a.507.507 0 0 0-.302.819l7.32 8.883a1 1 0 0 0 1.185.204C12.735 20.405 16 16.792 16 15"/></g></svg>
<div class="t" style="left:114.00px;top:1226.27px;font-size:29.5px;line-height:38px;color:#5f5f5f;font-weight:400;font-family:'Liberation Sans', sans-serif;letter-spacing:0px;">Branding</div>
<svg class="r" style="left:59.0px;top:1296.1px;" width="38" height="38" viewBox="0 0 24 24" fill="none" stroke-linecap="round" stroke-linejoin="round"><g stroke="#5f5f5f" stroke-width="1.22"><rect width="20" height="16" x="2" y="4" rx="2"/><path d="m2 7 8.97 5.7a1.94 1.94 0 0 0 2.06 0L22 7"/></g></svg>
<div class="t" style="left:114.00px;top:1297.57px;font-size:29.5px;line-height:38px;color:#5f5f5f;font-weight:400;font-family:'Liberation Sans', sans-serif;letter-spacing:0px;">Emails</div>
<svg class="r" style="left:59.0px;top:1368.0px;" width="38" height="38" viewBox="0 0 24 24" fill="none" stroke-linecap="round" stroke-linejoin="round"><g stroke="#5f5f5f" stroke-width="1.22"><circle cx="12" cy="12" r="10"/><path d="M12 2a14.5 14.5 0 0 0 0 20 14.5 14.5 0 0 0 0-20"/><path d="M2 12h20"/></g></svg>
<div class="t" style="left:114.00px;top:1369.47px;font-size:29.5px;line-height:38px;color:#5f5f5f;font-weight:400;font-family:'Liberation Sans', sans-serif;letter-spacing:0px;">Custom Domain</div>
<div class="t" style="left:63.00px;top:1449.85px;font-size:29px;line-height:38px;color:#606060;font-weight:700;font-family:'Liberation Sans', sans-serif;letter-spacing:0px;">Developers</div>
<svg class="r" style="left:59.0px;top:1515.5px;" width="38" height="38" viewBox="0 0 24 24" fill="none" stroke-linecap="round" stroke-linejoin="round"><g stroke="#5f5f5f" stroke-width="1.22"><path d="M18 16.98h-5.99c-1.1 0-1.95.94-2.48 1.9A4 4 0 0 1 2 17c.01-.7.2-1.4.57-2"/><path d="m6 17 3.13-5.78c.53-.97.1-2.18-.5-3.1a4 4 0 1 1 6.89-4.06"/><path d="m12 6 3.13 5.73C15.66 12.7 16.9 13 18 13a4 4 0 0 1 0 8"/></g></svg>
<div class="t" style="left:114.00px;top:1516.97px;font-size:29.5px;line-height:38px;color:#5f5f5f;font-weight:400;font-family:'Liberation Sans', sans-serif;letter-spacing:0px;">Webhooks</div>
<svg class="r" style="left:59.0px;top:1587.5px;" width="38" height="38" viewBox="0 0 24 24" fill="none" stroke-linecap="round" stroke-linejoin="round"><g stroke="#5f5f5f" stroke-width="1.22"><rect width="8" height="8" x="3" y="3" rx="2"/><path d="M7 11v4a2 2 0 0 0 2 2h4"/><rect width="8" height="8" x="13" y="13" rx="2"/></g></svg>
<div class="t" style="left:114.00px;top:1588.97px;font-size:29.5px;line-height:38px;color:#5f5f5f;font-weight:400;font-family:'Liberation Sans', sans-serif;letter-spacing:0px;">Interceptors</div>
<svg class="r" style="left:59.0px;top:1659.5px;" width="38" height="38" viewBox="0 0 24 24" fill="none" stroke-linecap="round" stroke-linejoin="round"><g stroke="#5f5f5f" stroke-width="1.22"><path d="M12 20V3.5"/><path d="M6 20v-6.5"/><path d="M18 20V9.5"/></g></svg>
<div class="t" style="left:114.00px;top:1660.97px;font-size:29.5px;line-height:38px;color:#5f5f5f;font-weight:400;font-family:'Liberation Sans', sans-serif;letter-spacing:0px;">Auth Logs</div>
<svg class="r" style="left:59.0px;top:1731.5px;" width="38" height="38" viewBox="0 0 24 24" fill="none" stroke-linecap="round" stroke-linejoin="round"><g stroke="#5f5f5f" stroke-width="1.22"><line x1="21" x2="14" y1="4" y2="4"/><line x1="10" x2="3" y1="4" y2="4"/><line x1="21" x2="12" y1="12" y2="12"/><line x1="8" x2="3" y1="12" y2="12"/><line x1="21" x2="16" y1="20" y2="20"/><line x1="12" x2="3" y1="20" y2="20"/><line x1="14" x2="14" y1="2" y2="6"/><line x1="8" x2="8" y1="10" y2="14"/><line x1="16" x2="16" y1="18" y2="22"/></g></svg>
<div class="t" style="left:114.00px;top:1732.97px;font-size:29.5px;line-height:38px;color:#5f5f5f;font-weight:400;font-family:'Liberation Sans', sans-serif;letter-spacing:0px;">Settings</div>
<div class="t" style="left:582.00px;top:284.28px;font-size:29.2px;line-height:38px;color:#1a1a1a;font-weight:400;font-family:'Liberation Sans', sans-serif;letter-spacing:0px;-webkit-text-stroke:0.75px #1a1a1a;">Roles</div>
<div class="t" style="left:736.00px;top:283.50px;font-size:30px;line-height:39px;color:#666666;font-weight:400;font-family:'Liberation Sans', sans-serif;letter-spacing:0px;-webkit-text-stroke:0.75px #666666;">Permissions</div>
<div class="r" style="left:558px;top:340px;width:2396px;height:2px;background:#d0d0d0;"></div>
<div class="r" style="left:558px;top:338px;width:122px;height:4px;background:#000000;"></div>
<div class="r" style="left:558px;top:374px;width:2396px;height:684px;border:2px solid #e6e6e6;border-radius:12px;"></div>
<div class="t" style="left:607.50px;top:427.76px;font-size:33.3px;line-height:43px;color:#1a1a1a;font-weight:400;font-family:'Liberation Sans', sans-serif;letter-spacing:0px;-webkit-text-stroke:0.3px #1a1a1a;">Manage Roles</div>
<div class="t" style="left:607.50px;top:482.37px;font-size:29.8px;line-height:39px;color:#666666;font-weight:400;font-family:'Liberation Sans', sans-serif;letter-spacing:0px;">Define and manage roles that can be assigned to users within your application.</div>
<div class="r" style="left:2684px;top:424px;width:220px;height:72px;border:2px solid #b9b9b9;border-radius:14px;background:#fff;"></div>
<svg class="r" style="left:2714px;top:445px;" width="30" height="30" viewBox="0 0 30 30" fill="none" stroke-linecap="round" stroke-linejoin="round"><path d="M15 5.5V24.5M5.5 15H24.5" stroke="#0a0a0a" stroke-width="2.5"/></svg>
<div class="t" style="left:2754.00px;top:442.35px;font-size:29px;line-height:38px;color:#0a0a0a;font-weight:400;font-family:'Liberation Sans', sans-serif;letter-spacing:0px;-webkit-text-stroke:0.9px #0a0a0a;">Add Role</div>
<div class="r" style="left:560px;top:568px;width:2392px;height:88px;background:#efefef;"></div>
<div class="t" style="left:607.50px;top:593.60px;font-size:30px;line-height:39px;color:#1a1a1a;font-weight:400;font-family:'Liberation Sans', sans-serif;letter-spacing:0px;-webkit-text-stroke:0.75px #1a1a1a;">Role Description</div>
<div class="t" style="left:1381.00px;top:594.41px;font-size:29.1px;line-height:38px;color:#1a1a1a;font-weight:400;font-family:'Liberation Sans', sans-serif;letter-spacing:0px;-webkit-text-stroke:0.75px #1a1a1a;">Role Name</div>
<div class="t" style="left:1780.00px;top:593.60px;font-size:30px;line-height:39px;color:#1a1a1a;font-weight:400;font-family:'Liberation Sans', sans-serif;letter-spacing:0px;-webkit-text-stroke:0.75px #1a1a1a;">Permissions</div>
<div class="r" style="left:560px;top:788px;width:2392px;height:2px;background:#e8e8e8;"></div>
<div class="r" style="left:560px;top:922px;width:2392px;height:2px;background:#e8e8e8;"></div>
<div class="t" style="left:608.00px;top:682.47px;font-size:29.5px;line-height:38px;color:#1a1a1a;font-weight:400;font-family:'Liberation Sans', sans-serif;letter-spacing:0px;-webkit-text-stroke:0.3px #1a1a1a;">Admin</div>
<div class="t" style="left:608.00px;top:726.67px;font-size:29.5px;line-height:38px;color:#666666;font-weight:400;font-family:'Liberation Sans', sans-serif;letter-spacing:0px;">Admin Role</div>
<div class="t" style="left:1380.00px;top:704.37px;font-size:28.3px;line-height:37px;color:#1a1a1a;font-weight:400;font-family:'Liberation Mono', monospace;letter-spacing:0px;-webkit-text-stroke:0.3px #1a1a1a;">admin</div>
<div class="r" style="left:1782px;top:722px;width:9px;height:2.5px;background:#1a1a1a;"></div>
<div class="r" style="left:2813.05px;top:719.55px;width:4.899999999999636px;height:4.900000000000091px;background:#1f1f1f;border-radius:50%;"></div>
<div class="r" style="left:2822.55px;top:719.55px;width:4.899999999999636px;height:4.900000000000091px;background:#1f1f1f;border-radius:50%;"></div>
<div class="r" style="left:2832.05px;top:719.55px;width:4.899999999999636px;height:4.900000000000091px;background:#1f1f1f;border-radius:50%;"></div>
<div class="t" style="left:608.00px;top:816.67px;font-size:29.5px;line-height:38px;color:#1a1a1a;font-weight:400;font-family:'Liberation Sans', sans-serif;letter-spacing:0px;-webkit-text-stroke:0.3px #1a1a1a;">Member</div>
<div class="t" style="left:608.00px;top:860.97px;font-size:29.5px;line-height:38px;color:#666666;font-weight:400;font-family:'Liberation Sans', sans-serif;letter-spacing:0px;">Member Role</div>
<div class="t" style="left:1380.00px;top:838.37px;font-size:28.3px;line-height:37px;color:#1a1a1a;font-weight:400;font-family:'Liberation Mono', monospace;letter-spacing:0px;-webkit-text-stroke:0.3px #1a1a1a;">member</div>
<div class="r" style="left:1782px;top:855px;width:9px;height:2.5px;background:#1a1a1a;"></div>
<div class="r" style="left:2813.05px;top:853.55px;width:4.899999999999636px;height:4.900000000000091px;background:#1f1f1f;border-radius:50%;"></div>
<div class="r" style="left:2822.55px;top:853.55px;width:4.899999999999636px;height:4.900000000000091px;background:#1f1f1f;border-radius:50%;"></div>
<div class="r" style="left:2832.05px;top:853.55px;width:4.899999999999636px;height:4.900000000000091px;background:#1f1f1f;border-radius:50%;"></div>
<div class="t" style="left:608.00px;top:969.77px;font-size:29.5px;line-height:38px;color:#1a1a1a;font-weight:400;font-family:'Liberation Sans', sans-serif;letter-spacing:0px;-webkit-text-stroke:0.3px #1a1a1a;">Viewer</div>
<div class="r" style="left:709px;top:968px;width:247px;height:40px;background:#f0f0f0;border-radius:8px;"></div>
<div class="t" style="left:725.00px;top:971.93px;font-size:25.3px;line-height:33px;color:#1a1a1a;font-weight:400;font-family:'Liberation Sans', sans-serif;letter-spacing:0px;-webkit-text-stroke:0.3px #1a1a1a;">Base role: Member</div>
<div class="t" style="left:1380.00px;top:972.37px;font-size:28.3px;line-height:37px;color:#1a1a1a;font-weight:400;font-family:'Liberation Mono', monospace;letter-spacing:0px;-webkit-text-stroke:0.3px #1a1a1a;">viewer</div>
<div class="r" style="left:1780px;top:970px;width:154px;height:40px;background:#e9eef5;border-radius:8px;"></div>
<div class="t" style="left:1796.00px;top:973.83px;font-size:25.6px;line-height:33px;color:#5a6270;font-weight:400;font-family:'Liberation Sans', sans-serif;letter-spacing:0px;">inbox:read</div>
<div class="r" style="left:1946px;top:970px;width:165px;height:40px;background:#e9eef5;border-radius:8px;"></div>
<div class="t" style="left:1962.00px;top:973.83px;font-size:25.6px;line-height:33px;color:#5a6270;font-weight:400;font-family:'Liberation Sans', sans-serif;letter-spacing:0px;">emails:read</div>
<div class="r" style="left:2813.05px;top:987.55px;width:4.899999999999636px;height:4.900000000000091px;background:#1f1f1f;border-radius:50%;"></div>
<div class="r" style="left:2822.55px;top:987.55px;width:4.899999999999636px;height:4.900000000000091px;background:#1f1f1f;border-radius:50%;"></div>
<div class="r" style="left:2832.05px;top:987.55px;width:4.899999999999636px;height:4.900000000000091px;background:#1f1f1f;border-radius:50%;"></div>
<div class="r" style="left:558px;top:1107px;width:2396px;height:665px;border:2px solid #e6e6e6;border-radius:12px;"></div>
<div class="t" style="left:607.50px;top:1159.29px;font-size:33.5px;line-height:44px;color:#1a1a1a;font-weight:400;font-family:'Liberation Sans', sans-serif;letter-spacing:0px;-webkit-text-stroke:0.3px #1a1a1a;">Default Roles</div>
<div class="t" style="left:607.50px;top:1238.03px;font-size:30.2px;line-height:39px;color:#1a1a1a;font-weight:400;font-family:'Liberation Sans', sans-serif;letter-spacing:0px;-webkit-text-stroke:0.3px #1a1a1a;">Default role for creator</div>
<div class="t" style="left:607.50px;top:1285.15px;font-size:29.85px;line-height:39px;color:#808080;font-weight:400;font-family:'Liberation Sans', sans-serif;letter-spacing:0px;">The role that users are assigned after creating an organization.</div>
<div class="r" style="left:608px;top:1341px;width:600px;height:70px;border:2px solid #cbcbcb;border-radius:12px;background:#fff;"></div>
<div class="t" style="left:631.00px;top:1357.97px;font-size:29.5px;line-height:38px;color:#555555;font-weight:400;font-family:'Liberation Sans', sans-serif;letter-spacing:0px;">Admin</div>
<svg class="r" style="left:1158px;top:1361px;" width="24" height="30" viewBox="0 0 24 30" fill="none" stroke-linecap="round" stroke-linejoin="round"><path d="M5.2 11 L12 4.2 L18.8 11 M5.2 18.6 L12 25.4 L18.8 18.6" stroke="#1f1f1f" stroke-width="1.7" stroke-linecap="butt" stroke-linejoin="miter"/></svg>
<div class="t" style="left:607.50px;top:1444.43px;font-size:30.2px;line-height:39px;color:#1a1a1a;font-weight:400;font-family:'Liberation Sans', sans-serif;letter-spacing:0px;-webkit-text-stroke:0.3px #1a1a1a;">Default role for member</div>
<div class="t" style="left:607.50px;top:1492.40px;font-size:29.7px;line-height:39px;color:#808080;font-weight:400;font-family:'Liberation Sans', sans-serif;letter-spacing:0px;">The role that users are assigned as a new organization member.</div>
<div class="r" style="left:608px;top:1548px;width:600px;height:70px;border:2px solid #cbcbcb;border-radius:12px;background:#fff;"></div>
<div class="t" style="left:631.00px;top:1564.97px;font-size:29.5px;line-height:38px;color:#555555;font-weight:400;font-family:'Liberation Sans', sans-serif;letter-spacing:0px;">Member</div>
<svg class="r" style="left:1158px;top:1568px;" width="24" height="30" viewBox="0 0 24 30" fill="none" stroke-linecap="round" stroke-linejoin="round"><path d="M5.2 11 L12 4.2 L18.8 11 M5.2 18.6 L12 25.4 L18.8 18.6" stroke="#1f1f1f" stroke-width="1.7" stroke-linecap="butt" stroke-linejoin="miter"/></svg>
<div class="r" style="left:608px;top:1650px;width:122px;height:72px;background:#efefef;border-radius:12px;"></div>
<div class="t" style="left:635.00px;top:1667.55px;font-size:29px;line-height:38px;color:#c6c6c6;font-weight:400;font-family:'Liberation Sans', sans-serif;letter-spacing:0px;-webkit-text-stroke:0.75px #c6c6c6;">Save</div>
<div class="r" style="left:747px;top:1650px;width:153px;height:72px;border:2px solid #e3e3e3;border-radius:12px;background:#fff;"></div>
<div class="t" style="left:776.00px;top:1666.73px;font-size:29.9px;line-height:39px;color:#c6c6c6;font-weight:400;font-family:'Liberation Sans', sans-serif;letter-spacing:0px;-webkit-text-stroke:0.75px #c6c6c6;">Cancel</div>
</body></html>
